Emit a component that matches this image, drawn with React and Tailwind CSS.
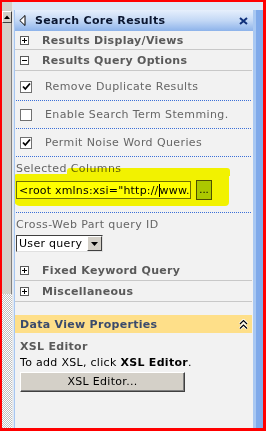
const PlusBox = ({ minus }) => (
  <div className="w-[9px] h-[9px] border border-[#5a5a5a] bg-white flex items-center justify-center shrink-0">
    <svg width="7" height="7" viewBox="0 0 7 7">
      <path d="M1 3.5H6" stroke="#000" strokeWidth="1" />
      {!minus && <path d="M3.5 1V6" stroke="#000" strokeWidth="1" />}
    </svg>
  </div>
);

const SectionRow = ({ label, minus, height }) => (
  <div className={`${height} flex items-center border-b border-[#c8c8c8] mr-[1px] pl-[5px]`}>
    <PlusBox minus={minus} />
    <span className="ml-[13px] font-bold text-[#5a5a5a] tracking-[0.3px]">{label}</span>
  </div>
);

const CheckBox = ({ checked }) => (
  <div className="w-[12px] h-[12px] border border-[#707070] bg-white shrink-0 flex items-center justify-center">
    {checked && (
      <svg width="9" height="9" viewBox="0 0 9 9">
        <path d="M1 4.5L3.3 7L8 1.5" stroke="#000" strokeWidth="1.8" fill="none" />
      </svg>
    )}
  </div>
);

const CheckRow = ({ label, checked }) => (
  <div className="h-[28px] flex items-center border-b border-dotted border-[#3b6fd8] mx-[1px] mr-[2px] pl-[4px]">
    <CheckBox checked={checked} />
    <span className="ml-[13px] text-[#666] tracking-[0.4px]">{label}</span>
  </div>
);

export default function App() {
  return (
    <div className="w-[266px] h-[431px] border-t-2 border-l-2 border-r-[3px] border-b-[3px] border-[#ff0000] flex overflow-hidden font-['DejaVu_Sans','Liberation_Sans',sans-serif] text-[11px] leading-[13px]">
      {/* scrollbar */}
      <div className="w-[12px] shrink-0 flex flex-col bg-[#dce8f7]">
        <div className="w-[11px] flex-1 flex flex-col border-r border-[#e8e8e8]">
          <div className="w-[10px] h-[9px] shrink-0 bg-[#d4d0c8]" />
          <div className="w-[10px] h-[12px] shrink-0 bg-[#d4d0c8] border-t border-l border-white border-b border-r border-b-[#404040] border-r-[#404040] flex items-center justify-center">
            <svg width="6" height="4" viewBox="0 0 6 4">
              <path d="M0 4L3 0.5L6 4Z" fill="#000" />
            </svg>
          </div>
          <div className="w-[10px] h-[271px] shrink-0 bg-[#d4d0c8] border-r border-[#808080]" />
          <div className="w-[10px] flex-1 bg-[repeating-conic-gradient(#c0c0c0_0_25%,#ffffff_0_50%)] bg-[length:2px_2px]" />
        </div>
      </div>

      <div className="flex-1 min-h-0 flex flex-col bg-[#dce8f7]">
        <div className="h-[8px] shrink-0" />
        <div className="flex-1 min-h-0 flex">
          {/* panel */}
          <div className="w-[239px] shrink-0 border-l border-[#a8c6f0] bg-[#f2f2f2] overflow-hidden">
            <div className="h-[21px] flex items-center bg-gradient-to-b from-[#e6effc] via-[#c3d8f5] to-[#8db3ea] pl-[4px] pr-[5px]">
              <svg width="7" height="11" viewBox="0 0 7 11">
                <path d="M6 0.5V10.5L0.8 5.5Z" fill="#fff" stroke="#000" strokeWidth="1" />
              </svg>
              <span className="ml-[9px] font-bold text-[#0a1630] tracking-[0.3px] flex-1">Search Core Results</span>
              <svg width="9" height="8" viewBox="0 0 9 8">
                <path d="M1 1L8 7M8 1L1 7" stroke="#10307a" strokeWidth="2" />
              </svg>
            </div>

            <SectionRow label="Results Display/Views" height="h-[19px]" />
            <SectionRow label="Results Query Options" minus height="h-[21px]" />

            <div className="pt-[2px]">
              <CheckRow label="Remove Duplicate Results" checked />
              <CheckRow label="Enable Search Term Stemming." />
              <CheckRow label="Permit Noise Word Queries" checked />
            </div>

            <div className="relative border-b border-dotted border-[#3b6fd8] mr-[2px] ml-[1px] pt-[5px] pb-[12px]">
              <div className="text-[#666] tracking-[0.4px]">Selected Columns</div>
              <div className="mt-[5px] flex items-center">
                <div className="w-[175px] h-[18px] border border-[#707070] bg-white flex items-center pl-[2px] overflow-hidden whitespace-nowrap text-black tracking-[0.2px]">
                  <span>&lt;root xmlns:xsi="http://</span>
                  <span className="h-[13px] border-l border-black" />
                  <span>www.</span>
                </div>
                <div className="ml-[5px] w-[16px] h-[20px] border border-[#505050] bg-[#acc8a0] flex items-center justify-center text-black text-[10px] leading-[10px] whitespace-nowrap">...</div>
              </div>
              <div className="absolute left-[-2px] top-[17px] w-[215px] h-[32px] bg-[#ffff00] mix-blend-multiply rounded-[3px_2px_4px_6px]" />
              <div className="absolute left-[51px] top-[11px] w-[163px] h-[8px] bg-[#ffff00] mix-blend-multiply rounded-t-[3px]" />
            </div>

            <div className="pt-[5px] pl-[1px]">
              <div className="text-[#666] tracking-[0.4px]">Cross-Web Part query ID</div>
              <div className="mt-[4px] w-[87px] h-[17px] bg-white border-t border-l border-[#404040] border-b border-r border-b-[#e0e0e0] border-r-[#e0e0e0] flex items-center">
                <span className="flex-1 pl-[2px] text-black tracking-[0.3px] whitespace-nowrap">User query</span>
                <div className="w-[15px] h-[15px] bg-[#d4d0c8] border-t border-l border-white border-b border-r border-b-[#404040] border-r-[#404040] flex items-center justify-center">
                  <svg width="7" height="4" viewBox="0 0 7 4">
                    <path d="M0 0H7L3.5 4Z" fill="#000" />
                  </svg>
                </div>
              </div>
            </div>

            <div className="mt-[9px]">
              <SectionRow label="Fixed Keyword Query" height="h-[20px]" />
              <SectionRow label="Miscellaneous" height="h-[21px]" />
            </div>

            <div className="mt-[13px] mr-[1px] h-[18px] bg-[#fedf89] flex items-center pl-[5px] pr-[4px]">
              <span className="flex-1 font-bold text-[#3a4a6c] tracking-[0.3px]">Data View Properties</span>
              <svg width="9" height="11" viewBox="0 0 9 11">
                <path d="M1 5L4.5 1.5L8 5M1 9.5L4.5 6L8 9.5" stroke="#fff" strokeWidth="3" fill="none" />
                <path d="M1 5L4.5 1.5L8 5M1 9.5L4.5 6L8 9.5" stroke="#000" strokeWidth="1.2" fill="none" />
              </svg>
            </div>

            <div className="pl-[5px] mt-[6px] leading-[16px]">
              <div className="font-bold text-[#5a5a5a] tracking-[0.3px]">XSL Editor</div>
              <div className="text-black tracking-[0.3px]">
                To add XSL, click <span className="font-bold">XSL Editor</span>.
              </div>
              <div className="mt-[1px] w-[165px] h-[20px] bg-[#d4d0c8] border-t border-l border-white border-b border-r border-b-[#404040] border-r-[#404040] shadow-[inset_-1px_-1px_#808080] flex items-center justify-center text-black tracking-[0.3px]">
                XSL Editor...
              </div>
              <div className="mt-[37px] ml-[-1px] w-[11px] h-[4px] bg-[#7c7c7c]" />
            </div>
          </div>

          {/* right strip */}
          <div className="w-[3px] bg-[#a9c8f2]" />
          <div className="flex-1 bg-[#80aaea]" />
        </div>
      </div>
    </div>
  );
}
